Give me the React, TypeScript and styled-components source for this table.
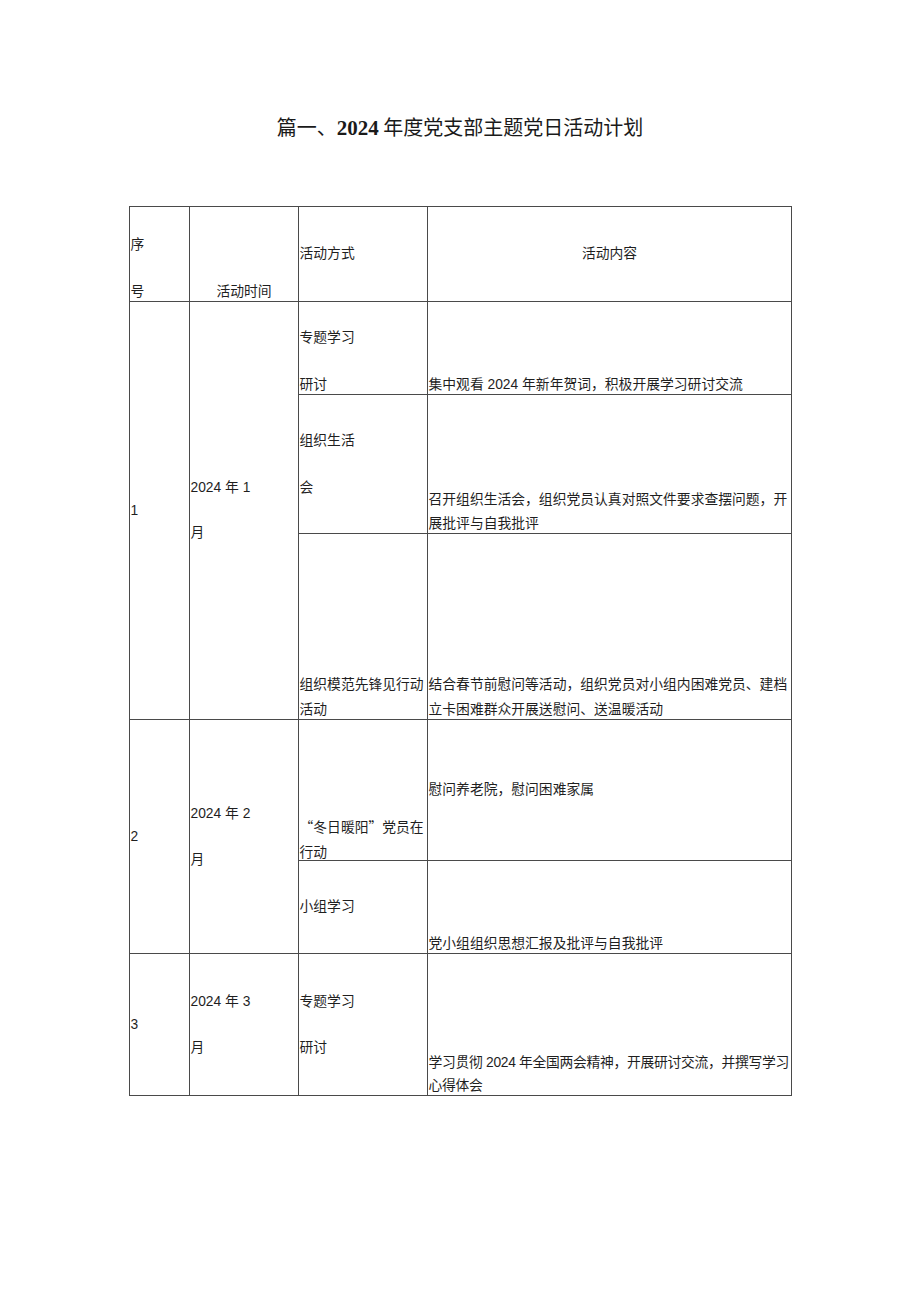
import React from 'react';
import styled, { createGlobalStyle } from 'styled-components';

const GlobalStyle = createGlobalStyle`
  body {
    margin: 0;
    background: #ffffff;
    font-family: 'Liberation Sans', 'Noto Sans CJK SC', sans-serif;
    color: #1f1f1f;
  }
`;

const Page = styled.div`
  width: 920px;
  padding-top: 112px;
`;

const Title = styled.h1`
  margin: 0 0 63px 0;
  text-align: center;
  font-size: 20px;
  line-height: 30px;
  font-weight: 400;
  font-family: 'Noto Sans CJK SC', sans-serif;
  color: #1a1a1a;
`;

const Year = styled.span`
  font-family: 'Liberation Serif', serif;
  font-weight: bold;
  font-size: 21px;
`;

const Table = styled.table`
  width: 662px;
  margin: 0 auto;
  border-collapse: collapse;
  table-layout: fixed;
`;

const Row = styled.tr<{ $h: number }>`
  height: ${(p) => p.$h}px;
`;

const Cell = styled.td<{ $v?: 'top' | 'middle' | 'bottom'; $center?: boolean }>`
  border: 1px solid #4a4a4a;
  padding: 0 0 0 1px;
  vertical-align: ${(p) => p.$v || 'middle'};
  text-align: ${(p) => (p.$center ? 'center' : 'left')};
  font-size: 13.8px;
`;

const Lines = styled.div<{ $gap: number; $center?: boolean; $tight?: boolean; $cjk?: boolean }>`
  display: flex;
  flex-direction: column;
  align-items: ${(p) => (p.$center ? 'center' : 'flex-start')};
  gap: ${(p) => p.$gap}px;
  letter-spacing: ${(p) => (p.$tight ? '-0.3px' : 'normal')};
  font-family: ${(p) =>
    p.$cjk ? "'Noto Sans CJK SC', sans-serif" : "'Liberation Sans', 'Noto Sans CJK SC', sans-serif"};
`;

const Line = styled.span`
  display: block;
  line-height: 18px;
  white-space: nowrap;
`;

type Props = { lines: string[]; gap?: number; center?: boolean; tight?: boolean; cjk?: boolean };

const Text: React.FC<Props> = ({ lines, gap = 6, center, tight, cjk }) => (
  <Lines $gap={gap} $center={center} $tight={tight} $cjk={cjk}>
    {lines.map((l) => (
      <Line key={l}>{l}</Line>
    ))}
  </Lines>
);

const WIDE = 29;

export default function App() {
  return (
    <Page>
      <GlobalStyle />
      <Title>
        篇一、<Year>2024</Year> 年度党支部主题党日活动计划
      </Title>
      <Table>
        <colgroup>
          <col style={{ width: 60 }} />
          <col style={{ width: 109 }} />
          <col style={{ width: 129 }} />
          <col style={{ width: 364 }} />
        </colgroup>
        <tbody>
          <Row $h={95}>
            <Cell $v="bottom">
              <Text lines={['序', '号']} gap={WIDE} />
            </Cell>
            <Cell $v="bottom" $center>
              <Text lines={['活动时间']} center />
            </Cell>
            <Cell>
              <Text lines={['活动方式']} />
            </Cell>
            <Cell $center>
              <Text lines={['活动内容']} center />
            </Cell>
          </Row>

          <Row $h={93}>
            <Cell rowSpan={3}>
              <Text lines={['1']} />
            </Cell>
            <Cell rowSpan={3}>
              <Text lines={['2024 年 1', '月']} gap={27} />
            </Cell>
            <Cell $v="bottom">
              <Text lines={['专题学习', '研讨']} gap={WIDE} />
            </Cell>
            <Cell $v="bottom">
              <Text lines={['集中观看 2024 年新年贺词，积极开展学习研讨交流']} />
            </Cell>
          </Row>
          <Row $h={139}>
            <Cell>
              <Text lines={['组织生活', '会']} gap={WIDE} />
            </Cell>
            <Cell $v="bottom">
              <Text lines={['召开组织生活会，组织党员认真对照文件要求查摆问题，开', '展批评与自我批评']} />
            </Cell>
          </Row>
          <Row $h={186}>
            <Cell $v="bottom">
              <Text lines={['组织模范先锋见行动', '活动']} gap={7} />
            </Cell>
            <Cell $v="bottom">
              <Text
                lines={['结合春节前慰问等活动，组织党员对小组内困难党员、建档', '立卡困难群众开展送慰问、送温暖活动']}
                gap={7}
              />
            </Cell>
          </Row>

          <Row $h={141}>
            <Cell rowSpan={2}>
              <Text lines={['2']} />
            </Cell>
            <Cell rowSpan={2}>
              <Text lines={['2024 年 2', '月']} gap={28} />
            </Cell>
            <Cell $v="bottom">
              <Text lines={['“冬日暖阳”党员在', '行动']} gap={7} cjk />
            </Cell>
            <Cell>
              <Text lines={['慰问养老院，慰问困难家属']} />
            </Cell>
          </Row>
          <Row $h={93}>
            <Cell>
              <Text lines={['小组学习']} />
            </Cell>
            <Cell $v="bottom">
              <Text lines={['党小组组织思想汇报及批评与自我批评']} />
            </Cell>
          </Row>

          <Row $h={142}>
            <Cell>
              <Text lines={['3']} />
            </Cell>
            <Cell>
              <Text lines={['2024 年 3', '月']} gap={28} />
            </Cell>
            <Cell>
              <Text lines={['专题学习', '研讨']} gap={28} />
            </Cell>
            <Cell $v="bottom">
              <Text
                lines={['学习贯彻 2024 年全国两会精神，开展研讨交流，并撰写学习', '心得体会']}
                gap={5}
                tight
              />
            </Cell>
          </Row>
        </tbody>
      </Table>
    </Page>
  );
}
